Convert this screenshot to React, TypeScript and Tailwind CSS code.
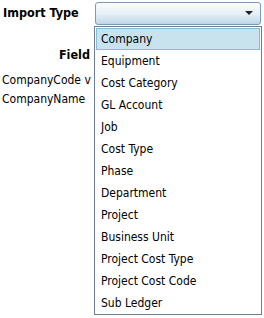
import React from "react";

const items = [
  "Company",
  "Equipment",
  "Cost Category",
  "GL Account",
  "Job",
  "Cost Type",
  "Phase",
  "Department",
  "Project",
  "Business Unit",
  "Project Cost Type",
  "Project Cost Code",
  "Sub Ledger",
];

export default function App() {
  return (
    <div
      className="relative w-[264px] h-[318px] bg-white text-black overflow-hidden"
      style={{ fontFamily: "'DejaVu Sans Condensed', 'DejaVu Sans', sans-serif" }}
    >
      <div className="flex items-center h-[26px] pl-[3px]">
        <div className="w-[92px] font-bold text-[12.5px]">Import Type</div>
        <div className="flex items-center justify-end w-[166px] h-[23px] rounded-[3px] border border-[#7b9bb6] bg-gradient-to-b from-[#fbfdfe] via-[#e6f0f7] to-[#bfd7e9] pr-[7px]">
          <div className="w-0 h-0 border-l-[4px] border-r-[4px] border-t-[4px] border-l-transparent border-r-transparent border-t-[#222]" />
        </div>
      </div>
      <div className="w-[90px] text-right font-bold text-[12.5px] mt-[20px]">Field</div>
      <div className="pl-[2px] mt-[6px] text-[12px] leading-[19px]">
        <div>CompanyCode v</div>
        <div>CompanyName</div>
      </div>

      <div className="absolute left-[94px] top-[26px] w-[168px] h-[289px] border border-[#6d7f90] bg-white p-px">
        {items.map((it, i) => (
          <div
            key={it}
            className={
              "h-[22px] flex items-center text-[12px] " +
              (i === 0 ? "bg-[#c9e3ee] border border-[#86bdd2] pl-[4px]" : "pl-[5px]")
            }
          >
            {it}
          </div>
        ))}
      </div>
    </div>
  );
}
